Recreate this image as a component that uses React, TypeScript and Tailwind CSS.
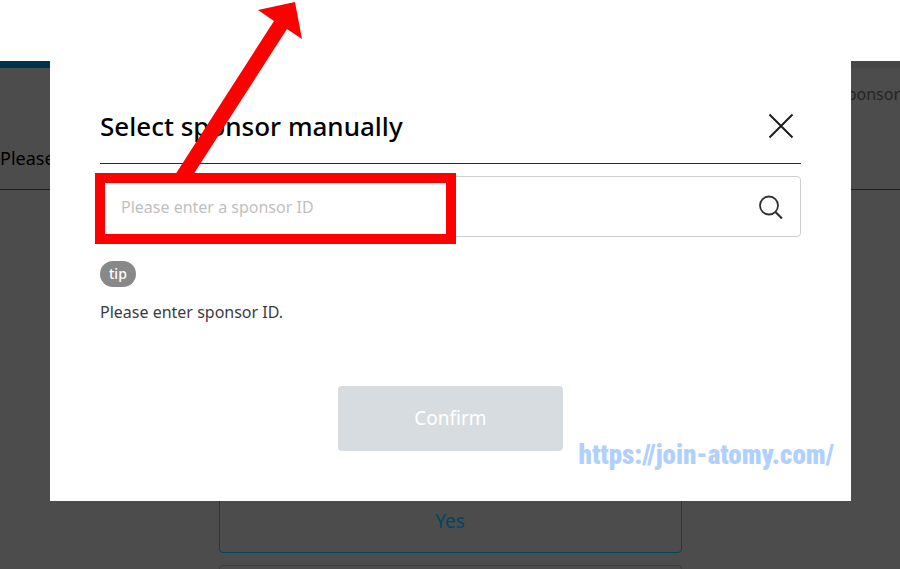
import { useState } from 'react';

const fontStack = "font-['Noto_Sans','Open_Sans',sans-serif]";

const CloseIcon = () => (
  <svg width="26" height="26" viewBox="0 0 26 26" fill="none" stroke="#1c1c20" strokeWidth="2" aria-hidden="true">
    <path d="M1.5 1.5 24.5 24.5M24.5 1.5 1.5 24.5" />
  </svg>
);

const SearchIcon = () => (
  <svg width="24" height="24" viewBox="0 0 24 24" fill="none" stroke="#303034" aria-hidden="true">
    <circle cx="10" cy="10.5" r="9" strokeWidth="1.8" />
    <path d="M16.5 17 23 23.5" strokeWidth="2.2" />
  </svg>
);

// Red marker box around the ID field, with the arrow leading out of it
const Annotation = () => (
  <svg
    className="pointer-events-none absolute left-0 top-0 z-20"
    width="480"
    height="260"
    viewBox="0 0 480 260"
    aria-hidden="true"
  >
    <path d="M295 2 302 39 287 29 193 175H175L274 21 258 10Z" fill="#fe0000" />
    <rect x="100" y="178" width="351" height="61" fill="none" stroke="#fe0000" strokeWidth="10" />
  </svg>
);

const PageBehind = () => (
  <div className="flex grow flex-col bg-[#4c4c4c]" aria-hidden="true">
    <div className="flex h-[7px] bg-[#474747]">
      <div className="w-1/2 bg-[#003549]" />
    </div>
    <div className="flex h-[52px] items-center justify-end text-[16px] text-[#242424]">Sponsor</div>
    <div className="flex h-[70px] items-center border-b border-[#1e1e1e] pt-2 text-[18px] text-black">Please</div>
    <div className="mx-auto flex w-[463px] grow flex-col justify-end gap-3">
      <button
        type="button"
        tabIndex={-1}
        className="h-16 shrink-0 rounded border border-[#00465f] text-[19px] text-[#00465f]"
      >
        Yes
      </button>
      <div className="h-1 shrink-0 rounded-t border border-b-0 border-[#3e3e3e]" />
    </div>
  </div>
);

const SponsorDialog = () => {
  const [sponsorId, setSponsorId] = useState('');

  return (
    <div
      role="dialog"
      aria-labelledby="sponsor-title"
      className="absolute left-[50px] right-[49px] top-[61px] z-10 bg-white px-[50px] pb-[50px] pt-10"
    >
      <div className="flex h-[63px] items-center justify-between border-b border-[#2c2c30] pb-3 pr-[7px]">
        <h1 id="sponsor-title" className="text-[26px] font-medium text-black">
          Select sponsor manually
        </h1>
        <button type="button" aria-label="Close">
          <CloseIcon />
        </button>
      </div>

      <form className="mt-3 flex h-[61px] items-center rounded border border-[#cfcfcf] pl-5 pr-[17px]">
        <input
          type="text"
          aria-label="Sponsor ID"
          placeholder="Please enter a sponsor ID"
          value={sponsorId}
          onChange={(e) => setSponsorId(e.target.value)}
          className="min-w-0 grow text-[16px] text-[#333333] outline-none placeholder:text-[#bfbfbf]"
        />
        <button type="button" aria-label="Search">
          <SearchIcon />
        </button>
      </form>

      <div className="mt-6 flex">
        <span className="rounded-full bg-[#888888] px-[9px] text-[14px] font-medium leading-[26px] text-white">tip</span>
      </div>
      <p className="mt-3 text-[16px] leading-[26px] text-[#3b3b3f]">Please enter sponsor ID.</p>

      <div className="mt-[61px] flex justify-center">
        <button type="button" className="h-[65px] w-[225px] rounded bg-[#d7dce0] text-[19px] text-white">
          Confirm
        </button>
      </div>
      <a
        href="https://join-atomy.com/"
        className="absolute bottom-7 right-[17px] font-['Liberation_Sans_Narrow','Roboto_Condensed',Roboto,sans-serif] text-[27px] font-black leading-9 text-[#b0d0ff]"
      >
        https://join-atomy.com/
      </a>
    </div>
  );
};

export default function App() {
  return (
    <main className={`relative flex h-screen flex-col overflow-hidden bg-white pt-[61px] ${fontStack}`}>
      <PageBehind />
      <SponsorDialog />
      <Annotation />
    </main>
  );
}
